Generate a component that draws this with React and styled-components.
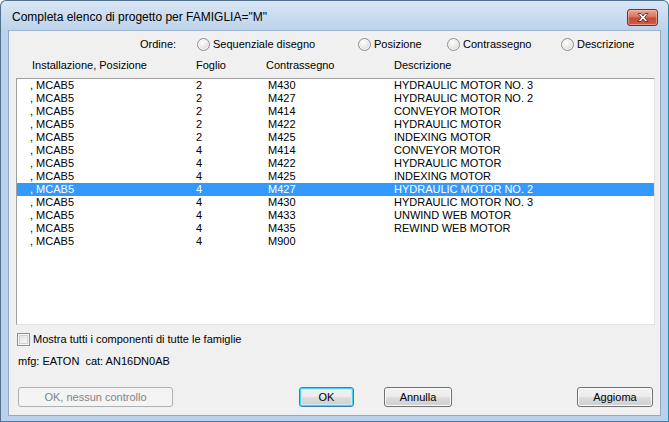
import React from "react";
import styled, { createGlobalStyle } from "styled-components";

const Global = createGlobalStyle`
  html, body { margin: 0; padding: 0; background: #ffffff; }
  body { font-family: "Liberation Sans", Arial, sans-serif; font-size: 11px; color: #000; }
  * { box-sizing: border-box; }
`;

const Window = styled.div`
  width: 669px;
  height: 422px;
  display: flex;
  flex-direction: column;
  background: linear-gradient(to bottom, #d9e6f4 0px, #c6d9ee 20px, #bbd2eb 30px, #b9d1ea 100%);
  border: 1px solid #51708d;
  border-bottom-color: #1e8fb0;
  border-right-color: #2b86a8;
  border-radius: 6px 6px 0 0;
  overflow: hidden;
`;

const TitleBar = styled.div`
  height: 29px;
  flex: none;
  display: flex;
  align-items: flex-start;
  justify-content: space-between;
  padding: 9px 10px 0 11px;
`;

const TitleText = styled.div`
  font-size: 12px;
  line-height: 14px;
  color: #000;
  font-family: "Liberation Sans", Arial, sans-serif;
`;

const CloseButton = styled.div`
  width: 31px;
  height: 17px;
  margin-top: -1px;
  border: 1px solid #7b2a21;
  border-radius: 3px;
  background: linear-gradient(to bottom, #e8a697 0%, #d9735f 45%, #c54b35 55%, #c9604a 100%);
  display: flex;
  align-items: center;
  justify-content: center;
  box-shadow: inset 0 0 0 1px rgba(255, 210, 200, 0.5);
`;

const Body = styled.div`
  flex: 1;
  display: flex;
  padding: 0 7px 5px 7px;
`;

const Client = styled.div`
  flex: 1;
  background: #f0f0f0;
  border: 1px solid #8fa9c4;
  border-top-color: #9db5ce;
  display: flex;
  flex-direction: column;
  padding: 0 5px 0 7px;
`;

const RadioRow = styled.div`
  display: flex;
  align-items: center;
  height: 14px;
  margin-top: 6px;
  padding-left: 124px;
`;

const OrderLabel = styled.span`
  width: 57px;
  line-height: 14px;
`;

const RadioOption = styled.label`
  display: flex;
  align-items: center;
  gap: 3px;
  width: ${(p) => (p.$w ? `${p.$w}px` : "auto")};
  line-height: 14px;
`;

const RadioCircle = styled.span`
  width: 13px;
  height: 13px;
  border-radius: 50%;
  border: 1px solid #8f8f8f;
  background: radial-gradient(circle at 40% 35%, #fdfdfd 0%, #eaeaea 45%, #cfcfcf 100%);
  box-shadow: inset 0 0 0 1px #f4f4f4;
  flex: none;
`;

const HeaderRow = styled.div`
  display: grid;
  grid-template-columns: 164px 70px 128px 1fr;
  height: 14px;
  line-height: 14px;
  margin-top: 7px;
  padding-left: 16px;
`;

const ListBox = styled.div`
  margin-top: 6px;
  height: 247px;
  background: #ffffff;
  border: 1px solid #a0a0a0;
  border-right-color: #e3e3e3;
  border-bottom-color: #e3e3e3;
  display: flex;
  flex-direction: column;
`;

const Row = styled.div`
  display: grid;
  grid-template-columns: 166px 72px 126px 1fr;
  height: 13px;
  line-height: 13px;
  padding-left: 13px;
  white-space: nowrap;
  background: ${(p) => (p.$selected ? "#3399ff" : "transparent")};
  color: ${(p) => (p.$selected ? "#ffffff" : "#000000")};
`;

const CheckRow = styled.label`
  display: flex;
  align-items: center;
  gap: 3px;
  height: 13px;
  margin-top: 8px;
  padding-left: 1px;
  line-height: 13px;
`;

const CheckBox = styled.span`
  width: 13px;
  height: 13px;
  border: 1px solid #8f8f8f;
  background: linear-gradient(135deg, #dcdcdc 0%, #f0f0f0 60%, #fbfbfb 100%);
  box-shadow: inset 0 0 0 1px #f4f4f4, inset 0 0 0 2px #d2d2d2;
  flex: none;
`;

const InfoText = styled.div`
  margin-top: 8px;
  padding-left: 2px;
  height: 14px;
  line-height: 14px;
`;

const ButtonRow = styled.div`
  display: flex;
  align-items: center;
  margin-top: 19px;
  height: 20px;
  padding-left: 2px;
  padding-right: 2px;
`;

const Button = styled.button`
  height: 20px;
  width: ${(p) => p.$w}px;
  margin-left: ${(p) => (p.$ml === "auto" ? "auto" : `${p.$ml || 0}px`)};
  padding: 0;
  font-family: "Liberation Sans", Arial, sans-serif;
  font-size: 11px;
  color: #000;
  border: 1px solid #707070;
  border-radius: 3px;
  background: linear-gradient(to bottom, #f2f2f2 0%, #ebebeb 50%, #dddddd 51%, #cfcfcf 100%);
  box-shadow: inset 0 0 0 1px #fcfcfc;

  &:disabled {
    color: #838383;
    border-color: #adb2b5;
    background: #f4f4f4;
    box-shadow: none;
  }
`;

const DefaultButton = styled(Button)`
  border-color: #3c7fb1;
  box-shadow: inset 0 0 0 1px #48d0f8, inset 0 0 0 2px #c4ecfb;
`;

const rows = [
  ["2", "M430", "HYDRAULIC MOTOR NO. 3"],
  ["2", "M427", "HYDRAULIC MOTOR NO. 2"],
  ["2", "M414", "CONVEYOR MOTOR"],
  ["2", "M422", "HYDRAULIC MOTOR"],
  ["2", "M425", "INDEXING MOTOR"],
  ["4", "M414", "CONVEYOR MOTOR"],
  ["4", "M422", "HYDRAULIC MOTOR"],
  ["4", "M425", "INDEXING MOTOR"],
  ["4", "M427", "HYDRAULIC MOTOR NO. 2"],
  ["4", "M430", "HYDRAULIC MOTOR NO. 3"],
  ["4", "M433", "UNWIND WEB MOTOR"],
  ["4", "M435", "REWIND WEB MOTOR"],
  ["4", "M900", ""],
];

const CloseIcon = () => (
  <svg width="14" height="11" viewBox="0 0 14 11">
    <path
      d="M2 1.5 L5 1.5 L7 4 L9 1.5 L12 1.5 L8.7 5.5 L12 9.5 L9 9.5 L7 7 L5 9.5 L2 9.5 L5.3 5.5 Z"
      fill="#ffffff"
      stroke="#5a1c14"
      strokeWidth="0.8"
      strokeLinejoin="round"
    />
  </svg>
);

export default function App() {
  return (
    <>
      <Global />
      <Window>
        <TitleBar>
          <TitleText>Completa elenco di progetto per FAMIGLIA="M"</TitleText>
          <CloseButton>
            <CloseIcon />
          </CloseButton>
        </TitleBar>
        <Body>
          <Client>
            <RadioRow>
              <OrderLabel>Ordine:</OrderLabel>
              <RadioOption $w={161}>
                <RadioCircle />
                Sequenziale disegno
              </RadioOption>
              <RadioOption $w={89}>
                <RadioCircle />
                Posizione
              </RadioOption>
              <RadioOption $w={114}>
                <RadioCircle />
                Contrassegno
              </RadioOption>
              <RadioOption>
                <RadioCircle />
                Descrizione
              </RadioOption>
            </RadioRow>
            <HeaderRow>
              <span>Installazione, Posizione</span>
              <span>Foglio</span>
              <span>Contrassegno</span>
              <span>Descrizione</span>
            </HeaderRow>
            <ListBox>
              {rows.map((r, i) => (
                <Row key={i} $selected={i === 8}>
                  <span>, MCAB5</span>
                  <span>{r[0]}</span>
                  <span>{r[1]}</span>
                  <span>{r[2]}</span>
                </Row>
              ))}
            </ListBox>
            <CheckRow>
              <CheckBox />
              Mostra tutti i componenti di tutte le famiglie
            </CheckRow>
            <InfoText>mfg: EATON&nbsp; cat: AN16DN0AB</InfoText>
            <ButtonRow>
              <Button $w={155} disabled>
                OK, nessun controllo
              </Button>
              <DefaultButton $w={55} $ml={126}>
                OK
              </DefaultButton>
              <Button $w={68} $ml={30}>
                Annulla
              </Button>
              <Button $w={76} $ml="auto">
                Aggioma
              </Button>
            </ButtonRow>
          </Client>
        </Body>
      </Window>
    </>
  );
}
